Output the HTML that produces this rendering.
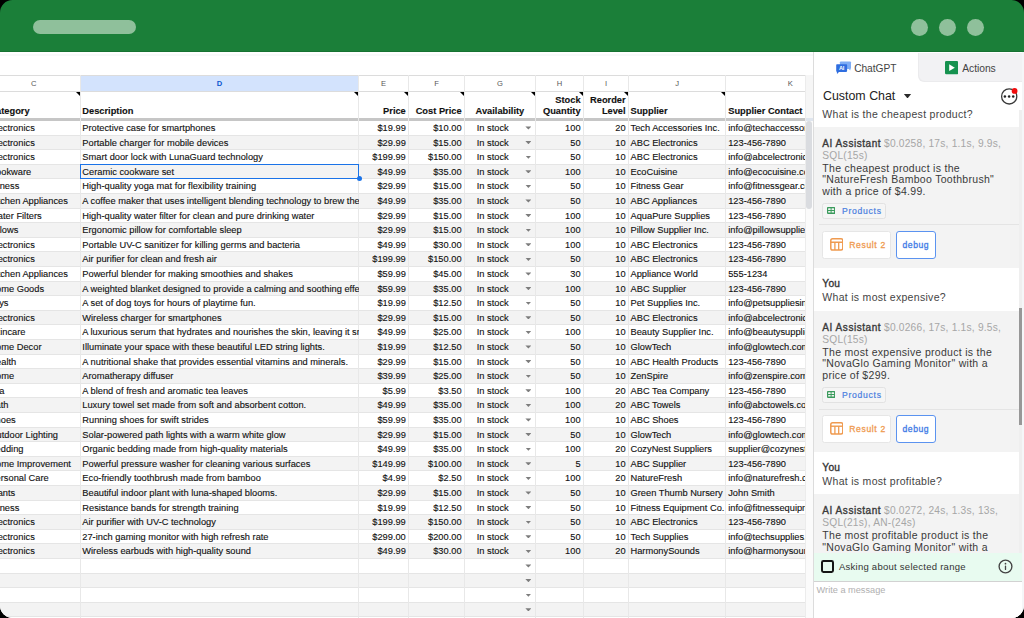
<!DOCTYPE html>
<html><head><meta charset="utf-8">
<style>
html,body{margin:0;padding:0;background:#000;width:1024px;height:618px;overflow:hidden}
*{font-family:"Liberation Sans",sans-serif}
#app{position:absolute;left:0;top:0;width:1024px;height:618px;border-radius:12.5px;overflow:hidden}
.r{position:absolute;left:0;right:0}
.hl{position:absolute;left:0;right:0;height:1px;background:#e5e5e5}
.hl2{position:absolute;left:0;right:0;height:1px;background:#dcdcdc}
.ch{position:absolute;left:0;right:0;background:#fff}
.vl{position:absolute;width:1px;height:600px;background:#e8e8e8}
.cl{position:absolute;text-align:center;font-size:7.6px;line-height:12px}
.c{position:absolute;white-space:nowrap;overflow:hidden;line-height:12px;box-sizing:border-box;-webkit-text-stroke:0.12px #111}
.tri{position:absolute;width:0;height:0;border-top:4.2px solid #000;border-left:4.2px solid transparent}
.dd{position:absolute;width:6px;height:3.2px;background:#7d7d7d;clip-path:polygon(0 0,100% 0,50% 100%)}
.t{position:absolute;white-space:pre}
</style></head><body>
<div id="app">
<div style="position:absolute;left:0;top:52px;width:1024px;height:566px;background:#fff"></div>
<div style="position:absolute;left:0;top:0;width:1024px;height:52px;background:#1b7f39"></div>
<div style="position:absolute;left:0;top:51px;width:1024px;height:1px;background:#167232"></div>
<div style="position:absolute;left:0;top:54px;width:813px;height:2px;background:#f8f9fa"></div>
<div style="position:absolute;left:32.7px;top:19.9px;width:103.2px;height:14.2px;border-radius:7.1px;background:#8fc09b"></div>
<div style="position:absolute;left:911px;top:19px;width:17px;height:17px;border-radius:50%;background:#8fc09b"></div>
<div style="position:absolute;left:939px;top:19px;width:17px;height:17px;border-radius:50%;background:#8fc09b"></div>
<div style="position:absolute;left:967px;top:19px;width:17px;height:17px;border-radius:50%;background:#8fc09b"></div>
<div id="sheet" style="position:absolute;left:0;top:52px;width:804.60px;height:566px;overflow:hidden">
<div class="r" style="top:68.40px;height:14.60px;background:#ffffff"></div>
<div class="r" style="top:83.00px;height:14.60px;background:#f3f3f3"></div>
<div class="r" style="top:97.60px;height:14.60px;background:#ffffff"></div>
<div class="r" style="top:112.20px;height:14.60px;background:#f3f3f3"></div>
<div class="r" style="top:126.80px;height:14.60px;background:#ffffff"></div>
<div class="r" style="top:141.40px;height:14.60px;background:#f3f3f3"></div>
<div class="r" style="top:156.00px;height:14.60px;background:#ffffff"></div>
<div class="r" style="top:170.60px;height:14.60px;background:#f3f3f3"></div>
<div class="r" style="top:185.20px;height:14.60px;background:#ffffff"></div>
<div class="r" style="top:199.80px;height:14.60px;background:#f3f3f3"></div>
<div class="r" style="top:214.40px;height:14.60px;background:#ffffff"></div>
<div class="r" style="top:229.00px;height:14.60px;background:#f3f3f3"></div>
<div class="r" style="top:243.60px;height:14.60px;background:#ffffff"></div>
<div class="r" style="top:258.20px;height:14.60px;background:#f3f3f3"></div>
<div class="r" style="top:272.80px;height:14.60px;background:#ffffff"></div>
<div class="r" style="top:287.40px;height:14.60px;background:#f3f3f3"></div>
<div class="r" style="top:302.00px;height:14.60px;background:#ffffff"></div>
<div class="r" style="top:316.60px;height:14.60px;background:#f3f3f3"></div>
<div class="r" style="top:331.20px;height:14.60px;background:#ffffff"></div>
<div class="r" style="top:345.80px;height:14.60px;background:#f3f3f3"></div>
<div class="r" style="top:360.40px;height:14.60px;background:#ffffff"></div>
<div class="r" style="top:375.00px;height:14.60px;background:#f3f3f3"></div>
<div class="r" style="top:389.60px;height:14.60px;background:#ffffff"></div>
<div class="r" style="top:404.20px;height:14.60px;background:#f3f3f3"></div>
<div class="r" style="top:418.80px;height:14.60px;background:#ffffff"></div>
<div class="r" style="top:433.40px;height:14.60px;background:#f3f3f3"></div>
<div class="r" style="top:448.00px;height:14.60px;background:#ffffff"></div>
<div class="r" style="top:462.60px;height:14.60px;background:#f3f3f3"></div>
<div class="r" style="top:477.20px;height:14.60px;background:#ffffff"></div>
<div class="r" style="top:491.80px;height:14.60px;background:#f3f3f3"></div>
<div class="r" style="top:506.40px;height:14.60px;background:#ffffff"></div>
<div class="r" style="top:521.00px;height:14.60px;background:#f3f3f3"></div>
<div class="r" style="top:535.60px;height:14.60px;background:#ffffff"></div>
<div class="r" style="top:550.20px;height:14.60px;background:#f3f3f3"></div>
<div class="r" style="top:564.80px;height:14.60px;background:#ffffff"></div>
<div class="hl" style="top:82.50px"></div>
<div class="hl" style="top:97.10px"></div>
<div class="hl" style="top:111.70px"></div>
<div class="hl" style="top:126.30px"></div>
<div class="hl" style="top:140.90px"></div>
<div class="hl" style="top:155.50px"></div>
<div class="hl" style="top:170.10px"></div>
<div class="hl" style="top:184.70px"></div>
<div class="hl" style="top:199.30px"></div>
<div class="hl" style="top:213.90px"></div>
<div class="hl" style="top:228.50px"></div>
<div class="hl" style="top:243.10px"></div>
<div class="hl" style="top:257.70px"></div>
<div class="hl" style="top:272.30px"></div>
<div class="hl" style="top:286.90px"></div>
<div class="hl" style="top:301.50px"></div>
<div class="hl" style="top:316.10px"></div>
<div class="hl" style="top:330.70px"></div>
<div class="hl" style="top:345.30px"></div>
<div class="hl" style="top:359.90px"></div>
<div class="hl" style="top:374.50px"></div>
<div class="hl" style="top:389.10px"></div>
<div class="hl" style="top:403.70px"></div>
<div class="hl" style="top:418.30px"></div>
<div class="hl" style="top:432.90px"></div>
<div class="hl" style="top:447.50px"></div>
<div class="hl" style="top:462.10px"></div>
<div class="hl" style="top:476.70px"></div>
<div class="hl" style="top:491.30px"></div>
<div class="hl" style="top:505.90px"></div>
<div class="hl" style="top:520.50px"></div>
<div class="hl" style="top:535.10px"></div>
<div class="hl" style="top:549.70px"></div>
<div class="hl" style="top:564.30px"></div>
<div class="hl" style="top:578.90px"></div>
<div class="ch" style="top:23.30px;height:16.10px"></div>
<div style="position:absolute;left:80.30px;top:23.30px;width:278.30px;height:16.10px;background:#d3e3fd"></div>
<div class="hl2" style="top:22.80px"></div>
<div class="hl2" style="top:38.90px"></div>
<div class="cl" style="left:3.65px;width:60px;top:26.47px;color:#575757">C</div>
<div class="cl" style="left:189.45px;width:60px;top:26.47px;color:#0b57d0;font-weight:bold">D</div>
<div class="cl" style="left:353.65px;width:60px;top:26.47px;color:#575757">E</div>
<div class="cl" style="left:406.60px;width:60px;top:26.47px;color:#575757">F</div>
<div class="cl" style="left:469.90px;width:60px;top:26.47px;color:#575757">G</div>
<div class="cl" style="left:529.40px;width:60px;top:26.47px;color:#575757">H</div>
<div class="cl" style="left:576.00px;width:60px;top:26.47px;color:#575757">I</div>
<div class="cl" style="left:647.05px;width:60px;top:26.47px;color:#575757">J</div>
<div class="cl" style="left:760.30px;width:60px;top:26.47px;color:#575757">K</div>
<div style="position:absolute;left:0;right:0;top:66.00px;height:3px;background:#c6c6c6"></div>
<div class="vl" style="left:79.80px;top:23.30px"></div>
<div class="vl" style="left:358.10px;top:23.30px"></div>
<div class="vl" style="left:408.20px;top:23.30px"></div>
<div class="vl" style="left:464.00px;top:23.30px"></div>
<div class="vl" style="left:534.80px;top:23.30px"></div>
<div class="vl" style="left:583.00px;top:23.30px"></div>
<div class="vl" style="left:628.00px;top:23.30px"></div>
<div class="vl" style="left:725.10px;top:23.30px"></div>
<div class="vl" style="left:854.50px;top:23.30px"></div>
<div class="c" style="left:-13.00px;top:52.58px;width:93.30px;text-align:left;padding-left:2.40px;padding-right:2.90px;font-size:9.29px;color:#111;font-weight:bold">Category</div>
<div class="c" style="left:80.30px;top:52.58px;width:278.30px;text-align:left;padding-left:2.00px;padding-right:2.90px;font-size:9.29px;color:#111;font-weight:bold">Description</div>
<div class="c" style="left:358.60px;top:52.58px;width:50.10px;text-align:right;padding-left:2.00px;padding-right:2.90px;font-size:9.29px;color:#111;font-weight:bold">Price</div>
<div class="c" style="left:408.70px;top:52.58px;width:55.80px;text-align:right;padding-left:2.00px;padding-right:2.90px;font-size:9.29px;color:#111;font-weight:bold">Cost Price</div>
<div class="c" style="left:464.50px;top:52.58px;width:70.80px;text-align:center;padding-left:0.00px;padding-right:0.00px;font-size:9.29px;color:#111;font-weight:bold">Availability</div>
<div class="c" style="left:535.30px;top:41.78px;width:48.20px;text-align:right;padding-left:2.00px;padding-right:2.90px;font-size:9.29px;color:#111;font-weight:bold">Stock</div>
<div class="c" style="left:535.30px;top:52.58px;width:48.20px;text-align:right;padding-left:2.00px;padding-right:2.90px;font-size:9.29px;color:#111;font-weight:bold">Quantity</div>
<div class="c" style="left:583.50px;top:41.78px;width:45.00px;text-align:right;padding-left:2.00px;padding-right:2.90px;font-size:9.29px;color:#111;font-weight:bold">Reorder</div>
<div class="c" style="left:583.50px;top:52.58px;width:45.00px;text-align:right;padding-left:2.00px;padding-right:2.90px;font-size:9.29px;color:#111;font-weight:bold">Level</div>
<div class="c" style="left:628.50px;top:52.58px;width:97.10px;text-align:left;padding-left:2.00px;padding-right:2.90px;font-size:9.29px;color:#111;font-weight:bold">Supplier</div>
<div class="c" style="left:725.60px;top:52.58px;width:129.40px;text-align:left;padding-left:2.60px;padding-right:2.90px;font-size:9.29px;color:#111;font-weight:bold">Supplier Contact</div>
<div class="tri" style="left:75.70px;top:39.60px"></div>
<div class="tri" style="left:354.00px;top:39.60px"></div>
<div class="tri" style="left:404.10px;top:39.60px"></div>
<div class="tri" style="left:459.90px;top:39.60px"></div>
<div class="tri" style="left:530.70px;top:39.60px"></div>
<div class="tri" style="left:578.90px;top:39.60px"></div>
<div class="tri" style="left:623.90px;top:39.60px"></div>
<div class="tri" style="left:721.00px;top:39.60px"></div>
<div class="c" style="left:-13.00px;top:69.98px;width:93.30px;text-align:left;padding-left:2.40px;padding-right:2.90px;font-size:9.29px;color:#111">Electronics</div>
<div class="c" style="left:80.30px;top:69.98px;width:278.30px;text-align:left;padding-left:2.00px;padding-right:2.90px;font-size:9.29px;color:#111">Protective case for smartphones</div>
<div class="c" style="left:358.60px;top:69.98px;width:50.10px;text-align:right;padding-left:2.00px;padding-right:2.90px;font-size:9.29px;color:#111">$19.99</div>
<div class="c" style="left:408.70px;top:69.98px;width:55.80px;text-align:right;padding-left:2.00px;padding-right:2.90px;font-size:9.29px;color:#111">$10.00</div>
<div class="c" style="left:464.50px;top:69.98px;width:70.80px;text-align:left;padding-left:12.20px;padding-right:2.90px;font-size:9.29px;color:#111">In stock</div>
<div class="dd" style="left:525.40px;top:74.40px"></div>
<div class="c" style="left:535.30px;top:69.98px;width:48.20px;text-align:right;padding-left:2.00px;padding-right:2.90px;font-size:9.29px;color:#111">100</div>
<div class="c" style="left:583.50px;top:69.98px;width:45.00px;text-align:right;padding-left:2.00px;padding-right:2.90px;font-size:9.29px;color:#111">20</div>
<div class="c" style="left:628.50px;top:69.98px;width:97.10px;text-align:left;padding-left:2.00px;padding-right:2.90px;font-size:9.29px;color:#111">Tech Accessories Inc.</div>
<div class="c" style="left:725.60px;top:69.98px;width:129.40px;text-align:left;padding-left:2.60px;padding-right:2.90px;font-size:9.29px;color:#111">info@techaccessories.com</div>
<div class="c" style="left:-13.00px;top:84.58px;width:93.30px;text-align:left;padding-left:2.40px;padding-right:2.90px;font-size:9.29px;color:#111">Electronics</div>
<div class="c" style="left:80.30px;top:84.58px;width:278.30px;text-align:left;padding-left:2.00px;padding-right:2.90px;font-size:9.29px;color:#111">Portable charger for mobile devices</div>
<div class="c" style="left:358.60px;top:84.58px;width:50.10px;text-align:right;padding-left:2.00px;padding-right:2.90px;font-size:9.29px;color:#111">$29.99</div>
<div class="c" style="left:408.70px;top:84.58px;width:55.80px;text-align:right;padding-left:2.00px;padding-right:2.90px;font-size:9.29px;color:#111">$15.00</div>
<div class="c" style="left:464.50px;top:84.58px;width:70.80px;text-align:left;padding-left:12.20px;padding-right:2.90px;font-size:9.29px;color:#111">In stock</div>
<div class="dd" style="left:525.40px;top:89.00px"></div>
<div class="c" style="left:535.30px;top:84.58px;width:48.20px;text-align:right;padding-left:2.00px;padding-right:2.90px;font-size:9.29px;color:#111">50</div>
<div class="c" style="left:583.50px;top:84.58px;width:45.00px;text-align:right;padding-left:2.00px;padding-right:2.90px;font-size:9.29px;color:#111">10</div>
<div class="c" style="left:628.50px;top:84.58px;width:97.10px;text-align:left;padding-left:2.00px;padding-right:2.90px;font-size:9.29px;color:#111">ABC Electronics</div>
<div class="c" style="left:725.60px;top:84.58px;width:129.40px;text-align:left;padding-left:2.60px;padding-right:2.90px;font-size:9.29px;color:#111">123-456-7890</div>
<div class="c" style="left:-13.00px;top:99.18px;width:93.30px;text-align:left;padding-left:2.40px;padding-right:2.90px;font-size:9.29px;color:#111">Electronics</div>
<div class="c" style="left:80.30px;top:99.18px;width:278.30px;text-align:left;padding-left:2.00px;padding-right:2.90px;font-size:9.29px;color:#111">Smart door lock with LunaGuard technology</div>
<div class="c" style="left:358.60px;top:99.18px;width:50.10px;text-align:right;padding-left:2.00px;padding-right:2.90px;font-size:9.29px;color:#111">$199.99</div>
<div class="c" style="left:408.70px;top:99.18px;width:55.80px;text-align:right;padding-left:2.00px;padding-right:2.90px;font-size:9.29px;color:#111">$150.00</div>
<div class="c" style="left:464.50px;top:99.18px;width:70.80px;text-align:left;padding-left:12.20px;padding-right:2.90px;font-size:9.29px;color:#111">In stock</div>
<div class="dd" style="left:525.40px;top:103.60px"></div>
<div class="c" style="left:535.30px;top:99.18px;width:48.20px;text-align:right;padding-left:2.00px;padding-right:2.90px;font-size:9.29px;color:#111">50</div>
<div class="c" style="left:583.50px;top:99.18px;width:45.00px;text-align:right;padding-left:2.00px;padding-right:2.90px;font-size:9.29px;color:#111">10</div>
<div class="c" style="left:628.50px;top:99.18px;width:97.10px;text-align:left;padding-left:2.00px;padding-right:2.90px;font-size:9.29px;color:#111">ABC Electronics</div>
<div class="c" style="left:725.60px;top:99.18px;width:129.40px;text-align:left;padding-left:2.60px;padding-right:2.90px;font-size:9.29px;color:#111">info@abcelectronics.com</div>
<div class="c" style="left:-13.00px;top:113.78px;width:93.30px;text-align:left;padding-left:2.40px;padding-right:2.90px;font-size:9.29px;color:#111">Cookware</div>
<div class="c" style="left:80.30px;top:113.78px;width:278.30px;text-align:left;padding-left:2.00px;padding-right:2.90px;font-size:9.29px;color:#111">Ceramic cookware set</div>
<div class="c" style="left:358.60px;top:113.78px;width:50.10px;text-align:right;padding-left:2.00px;padding-right:2.90px;font-size:9.29px;color:#111">$49.99</div>
<div class="c" style="left:408.70px;top:113.78px;width:55.80px;text-align:right;padding-left:2.00px;padding-right:2.90px;font-size:9.29px;color:#111">$35.00</div>
<div class="c" style="left:464.50px;top:113.78px;width:70.80px;text-align:left;padding-left:12.20px;padding-right:2.90px;font-size:9.29px;color:#111">In stock</div>
<div class="dd" style="left:525.40px;top:118.20px"></div>
<div class="c" style="left:535.30px;top:113.78px;width:48.20px;text-align:right;padding-left:2.00px;padding-right:2.90px;font-size:9.29px;color:#111">100</div>
<div class="c" style="left:583.50px;top:113.78px;width:45.00px;text-align:right;padding-left:2.00px;padding-right:2.90px;font-size:9.29px;color:#111">10</div>
<div class="c" style="left:628.50px;top:113.78px;width:97.10px;text-align:left;padding-left:2.00px;padding-right:2.90px;font-size:9.29px;color:#111">EcoCuisine</div>
<div class="c" style="left:725.60px;top:113.78px;width:129.40px;text-align:left;padding-left:2.60px;padding-right:2.90px;font-size:9.29px;color:#111">info@ecocuisine.com</div>
<div class="c" style="left:-13.00px;top:128.38px;width:93.30px;text-align:left;padding-left:2.40px;padding-right:2.90px;font-size:9.29px;color:#111">Fitness</div>
<div class="c" style="left:80.30px;top:128.38px;width:278.30px;text-align:left;padding-left:2.00px;padding-right:2.90px;font-size:9.29px;color:#111">High-quality yoga mat for flexibility training</div>
<div class="c" style="left:358.60px;top:128.38px;width:50.10px;text-align:right;padding-left:2.00px;padding-right:2.90px;font-size:9.29px;color:#111">$29.99</div>
<div class="c" style="left:408.70px;top:128.38px;width:55.80px;text-align:right;padding-left:2.00px;padding-right:2.90px;font-size:9.29px;color:#111">$15.00</div>
<div class="c" style="left:464.50px;top:128.38px;width:70.80px;text-align:left;padding-left:12.20px;padding-right:2.90px;font-size:9.29px;color:#111">In stock</div>
<div class="dd" style="left:525.40px;top:132.80px"></div>
<div class="c" style="left:535.30px;top:128.38px;width:48.20px;text-align:right;padding-left:2.00px;padding-right:2.90px;font-size:9.29px;color:#111">50</div>
<div class="c" style="left:583.50px;top:128.38px;width:45.00px;text-align:right;padding-left:2.00px;padding-right:2.90px;font-size:9.29px;color:#111">10</div>
<div class="c" style="left:628.50px;top:128.38px;width:97.10px;text-align:left;padding-left:2.00px;padding-right:2.90px;font-size:9.29px;color:#111">Fitness Gear</div>
<div class="c" style="left:725.60px;top:128.38px;width:129.40px;text-align:left;padding-left:2.60px;padding-right:2.90px;font-size:9.29px;color:#111">info@fitnessgear.com</div>
<div class="c" style="left:-13.00px;top:142.98px;width:93.30px;text-align:left;padding-left:2.40px;padding-right:2.90px;font-size:9.29px;color:#111">Kitchen Appliances</div>
<div class="c" style="left:80.30px;top:142.98px;width:278.30px;text-align:left;padding-left:2.00px;padding-right:2.90px;font-size:9.29px;color:#111">A coffee maker that uses intelligent blending technology to brew the perfect cup</div>
<div class="c" style="left:358.60px;top:142.98px;width:50.10px;text-align:right;padding-left:2.00px;padding-right:2.90px;font-size:9.29px;color:#111">$49.99</div>
<div class="c" style="left:408.70px;top:142.98px;width:55.80px;text-align:right;padding-left:2.00px;padding-right:2.90px;font-size:9.29px;color:#111">$35.00</div>
<div class="c" style="left:464.50px;top:142.98px;width:70.80px;text-align:left;padding-left:12.20px;padding-right:2.90px;font-size:9.29px;color:#111">In stock</div>
<div class="dd" style="left:525.40px;top:147.40px"></div>
<div class="c" style="left:535.30px;top:142.98px;width:48.20px;text-align:right;padding-left:2.00px;padding-right:2.90px;font-size:9.29px;color:#111">50</div>
<div class="c" style="left:583.50px;top:142.98px;width:45.00px;text-align:right;padding-left:2.00px;padding-right:2.90px;font-size:9.29px;color:#111">10</div>
<div class="c" style="left:628.50px;top:142.98px;width:97.10px;text-align:left;padding-left:2.00px;padding-right:2.90px;font-size:9.29px;color:#111">ABC Appliances</div>
<div class="c" style="left:725.60px;top:142.98px;width:129.40px;text-align:left;padding-left:2.60px;padding-right:2.90px;font-size:9.29px;color:#111">123-456-7890</div>
<div class="c" style="left:-13.00px;top:157.58px;width:93.30px;text-align:left;padding-left:2.40px;padding-right:2.90px;font-size:9.29px;color:#111">Water Filters</div>
<div class="c" style="left:80.30px;top:157.58px;width:278.30px;text-align:left;padding-left:2.00px;padding-right:2.90px;font-size:9.29px;color:#111">High-quality water filter for clean and pure drinking water</div>
<div class="c" style="left:358.60px;top:157.58px;width:50.10px;text-align:right;padding-left:2.00px;padding-right:2.90px;font-size:9.29px;color:#111">$29.99</div>
<div class="c" style="left:408.70px;top:157.58px;width:55.80px;text-align:right;padding-left:2.00px;padding-right:2.90px;font-size:9.29px;color:#111">$15.00</div>
<div class="c" style="left:464.50px;top:157.58px;width:70.80px;text-align:left;padding-left:12.20px;padding-right:2.90px;font-size:9.29px;color:#111">In stock</div>
<div class="dd" style="left:525.40px;top:162.00px"></div>
<div class="c" style="left:535.30px;top:157.58px;width:48.20px;text-align:right;padding-left:2.00px;padding-right:2.90px;font-size:9.29px;color:#111">100</div>
<div class="c" style="left:583.50px;top:157.58px;width:45.00px;text-align:right;padding-left:2.00px;padding-right:2.90px;font-size:9.29px;color:#111">10</div>
<div class="c" style="left:628.50px;top:157.58px;width:97.10px;text-align:left;padding-left:2.00px;padding-right:2.90px;font-size:9.29px;color:#111">AquaPure Supplies</div>
<div class="c" style="left:725.60px;top:157.58px;width:129.40px;text-align:left;padding-left:2.60px;padding-right:2.90px;font-size:9.29px;color:#111">123-456-7890</div>
<div class="c" style="left:-13.00px;top:172.18px;width:93.30px;text-align:left;padding-left:2.40px;padding-right:2.90px;font-size:9.29px;color:#111">Pillows</div>
<div class="c" style="left:80.30px;top:172.18px;width:278.30px;text-align:left;padding-left:2.00px;padding-right:2.90px;font-size:9.29px;color:#111">Ergonomic pillow for comfortable sleep</div>
<div class="c" style="left:358.60px;top:172.18px;width:50.10px;text-align:right;padding-left:2.00px;padding-right:2.90px;font-size:9.29px;color:#111">$29.99</div>
<div class="c" style="left:408.70px;top:172.18px;width:55.80px;text-align:right;padding-left:2.00px;padding-right:2.90px;font-size:9.29px;color:#111">$15.00</div>
<div class="c" style="left:464.50px;top:172.18px;width:70.80px;text-align:left;padding-left:12.20px;padding-right:2.90px;font-size:9.29px;color:#111">In stock</div>
<div class="dd" style="left:525.40px;top:176.60px"></div>
<div class="c" style="left:535.30px;top:172.18px;width:48.20px;text-align:right;padding-left:2.00px;padding-right:2.90px;font-size:9.29px;color:#111">100</div>
<div class="c" style="left:583.50px;top:172.18px;width:45.00px;text-align:right;padding-left:2.00px;padding-right:2.90px;font-size:9.29px;color:#111">10</div>
<div class="c" style="left:628.50px;top:172.18px;width:97.10px;text-align:left;padding-left:2.00px;padding-right:2.90px;font-size:9.29px;color:#111">Pillow Supplier Inc.</div>
<div class="c" style="left:725.60px;top:172.18px;width:129.40px;text-align:left;padding-left:2.60px;padding-right:2.90px;font-size:9.29px;color:#111">info@pillowsupplier.com</div>
<div class="c" style="left:-13.00px;top:186.78px;width:93.30px;text-align:left;padding-left:2.40px;padding-right:2.90px;font-size:9.29px;color:#111">Electronics</div>
<div class="c" style="left:80.30px;top:186.78px;width:278.30px;text-align:left;padding-left:2.00px;padding-right:2.90px;font-size:9.29px;color:#111">Portable UV-C sanitizer for killing germs and bacteria</div>
<div class="c" style="left:358.60px;top:186.78px;width:50.10px;text-align:right;padding-left:2.00px;padding-right:2.90px;font-size:9.29px;color:#111">$49.99</div>
<div class="c" style="left:408.70px;top:186.78px;width:55.80px;text-align:right;padding-left:2.00px;padding-right:2.90px;font-size:9.29px;color:#111">$30.00</div>
<div class="c" style="left:464.50px;top:186.78px;width:70.80px;text-align:left;padding-left:12.20px;padding-right:2.90px;font-size:9.29px;color:#111">In stock</div>
<div class="dd" style="left:525.40px;top:191.20px"></div>
<div class="c" style="left:535.30px;top:186.78px;width:48.20px;text-align:right;padding-left:2.00px;padding-right:2.90px;font-size:9.29px;color:#111">100</div>
<div class="c" style="left:583.50px;top:186.78px;width:45.00px;text-align:right;padding-left:2.00px;padding-right:2.90px;font-size:9.29px;color:#111">10</div>
<div class="c" style="left:628.50px;top:186.78px;width:97.10px;text-align:left;padding-left:2.00px;padding-right:2.90px;font-size:9.29px;color:#111">ABC Electronics</div>
<div class="c" style="left:725.60px;top:186.78px;width:129.40px;text-align:left;padding-left:2.60px;padding-right:2.90px;font-size:9.29px;color:#111">123-456-7890</div>
<div class="c" style="left:-13.00px;top:201.38px;width:93.30px;text-align:left;padding-left:2.40px;padding-right:2.90px;font-size:9.29px;color:#111">Electronics</div>
<div class="c" style="left:80.30px;top:201.38px;width:278.30px;text-align:left;padding-left:2.00px;padding-right:2.90px;font-size:9.29px;color:#111">Air purifier for clean and fresh air</div>
<div class="c" style="left:358.60px;top:201.38px;width:50.10px;text-align:right;padding-left:2.00px;padding-right:2.90px;font-size:9.29px;color:#111">$199.99</div>
<div class="c" style="left:408.70px;top:201.38px;width:55.80px;text-align:right;padding-left:2.00px;padding-right:2.90px;font-size:9.29px;color:#111">$150.00</div>
<div class="c" style="left:464.50px;top:201.38px;width:70.80px;text-align:left;padding-left:12.20px;padding-right:2.90px;font-size:9.29px;color:#111">In stock</div>
<div class="dd" style="left:525.40px;top:205.80px"></div>
<div class="c" style="left:535.30px;top:201.38px;width:48.20px;text-align:right;padding-left:2.00px;padding-right:2.90px;font-size:9.29px;color:#111">50</div>
<div class="c" style="left:583.50px;top:201.38px;width:45.00px;text-align:right;padding-left:2.00px;padding-right:2.90px;font-size:9.29px;color:#111">10</div>
<div class="c" style="left:628.50px;top:201.38px;width:97.10px;text-align:left;padding-left:2.00px;padding-right:2.90px;font-size:9.29px;color:#111">ABC Electronics</div>
<div class="c" style="left:725.60px;top:201.38px;width:129.40px;text-align:left;padding-left:2.60px;padding-right:2.90px;font-size:9.29px;color:#111">123-456-7890</div>
<div class="c" style="left:-13.00px;top:215.98px;width:93.30px;text-align:left;padding-left:2.40px;padding-right:2.90px;font-size:9.29px;color:#111">Kitchen Appliances</div>
<div class="c" style="left:80.30px;top:215.98px;width:278.30px;text-align:left;padding-left:2.00px;padding-right:2.90px;font-size:9.29px;color:#111">Powerful blender for making smoothies and shakes</div>
<div class="c" style="left:358.60px;top:215.98px;width:50.10px;text-align:right;padding-left:2.00px;padding-right:2.90px;font-size:9.29px;color:#111">$59.99</div>
<div class="c" style="left:408.70px;top:215.98px;width:55.80px;text-align:right;padding-left:2.00px;padding-right:2.90px;font-size:9.29px;color:#111">$45.00</div>
<div class="c" style="left:464.50px;top:215.98px;width:70.80px;text-align:left;padding-left:12.20px;padding-right:2.90px;font-size:9.29px;color:#111">In stock</div>
<div class="dd" style="left:525.40px;top:220.40px"></div>
<div class="c" style="left:535.30px;top:215.98px;width:48.20px;text-align:right;padding-left:2.00px;padding-right:2.90px;font-size:9.29px;color:#111">30</div>
<div class="c" style="left:583.50px;top:215.98px;width:45.00px;text-align:right;padding-left:2.00px;padding-right:2.90px;font-size:9.29px;color:#111">10</div>
<div class="c" style="left:628.50px;top:215.98px;width:97.10px;text-align:left;padding-left:2.00px;padding-right:2.90px;font-size:9.29px;color:#111">Appliance World</div>
<div class="c" style="left:725.60px;top:215.98px;width:129.40px;text-align:left;padding-left:2.60px;padding-right:2.90px;font-size:9.29px;color:#111">555-1234</div>
<div class="c" style="left:-13.00px;top:230.58px;width:93.30px;text-align:left;padding-left:2.40px;padding-right:2.90px;font-size:9.29px;color:#111">Home Goods</div>
<div class="c" style="left:80.30px;top:230.58px;width:278.30px;text-align:left;padding-left:2.00px;padding-right:2.90px;font-size:9.29px;color:#111">A weighted blanket designed to provide a calming and soothing effect</div>
<div class="c" style="left:358.60px;top:230.58px;width:50.10px;text-align:right;padding-left:2.00px;padding-right:2.90px;font-size:9.29px;color:#111">$59.99</div>
<div class="c" style="left:408.70px;top:230.58px;width:55.80px;text-align:right;padding-left:2.00px;padding-right:2.90px;font-size:9.29px;color:#111">$35.00</div>
<div class="c" style="left:464.50px;top:230.58px;width:70.80px;text-align:left;padding-left:12.20px;padding-right:2.90px;font-size:9.29px;color:#111">In stock</div>
<div class="dd" style="left:525.40px;top:235.00px"></div>
<div class="c" style="left:535.30px;top:230.58px;width:48.20px;text-align:right;padding-left:2.00px;padding-right:2.90px;font-size:9.29px;color:#111">100</div>
<div class="c" style="left:583.50px;top:230.58px;width:45.00px;text-align:right;padding-left:2.00px;padding-right:2.90px;font-size:9.29px;color:#111">10</div>
<div class="c" style="left:628.50px;top:230.58px;width:97.10px;text-align:left;padding-left:2.00px;padding-right:2.90px;font-size:9.29px;color:#111">ABC Supplier</div>
<div class="c" style="left:725.60px;top:230.58px;width:129.40px;text-align:left;padding-left:2.60px;padding-right:2.90px;font-size:9.29px;color:#111">123-456-7890</div>
<div class="c" style="left:-13.00px;top:245.18px;width:93.30px;text-align:left;padding-left:2.40px;padding-right:2.90px;font-size:9.29px;color:#111">Toys</div>
<div class="c" style="left:80.30px;top:245.18px;width:278.30px;text-align:left;padding-left:2.00px;padding-right:2.90px;font-size:9.29px;color:#111">A set of dog toys for hours of playtime fun.</div>
<div class="c" style="left:358.60px;top:245.18px;width:50.10px;text-align:right;padding-left:2.00px;padding-right:2.90px;font-size:9.29px;color:#111">$19.99</div>
<div class="c" style="left:408.70px;top:245.18px;width:55.80px;text-align:right;padding-left:2.00px;padding-right:2.90px;font-size:9.29px;color:#111">$12.50</div>
<div class="c" style="left:464.50px;top:245.18px;width:70.80px;text-align:left;padding-left:12.20px;padding-right:2.90px;font-size:9.29px;color:#111">In stock</div>
<div class="dd" style="left:525.40px;top:249.60px"></div>
<div class="c" style="left:535.30px;top:245.18px;width:48.20px;text-align:right;padding-left:2.00px;padding-right:2.90px;font-size:9.29px;color:#111">50</div>
<div class="c" style="left:583.50px;top:245.18px;width:45.00px;text-align:right;padding-left:2.00px;padding-right:2.90px;font-size:9.29px;color:#111">10</div>
<div class="c" style="left:628.50px;top:245.18px;width:97.10px;text-align:left;padding-left:2.00px;padding-right:2.90px;font-size:9.29px;color:#111">Pet Supplies Inc.</div>
<div class="c" style="left:725.60px;top:245.18px;width:129.40px;text-align:left;padding-left:2.60px;padding-right:2.90px;font-size:9.29px;color:#111">info@petsuppliesinc.com</div>
<div class="c" style="left:-13.00px;top:259.78px;width:93.30px;text-align:left;padding-left:2.40px;padding-right:2.90px;font-size:9.29px;color:#111">Electronics</div>
<div class="c" style="left:80.30px;top:259.78px;width:278.30px;text-align:left;padding-left:2.00px;padding-right:2.90px;font-size:9.29px;color:#111">Wireless charger for smartphones</div>
<div class="c" style="left:358.60px;top:259.78px;width:50.10px;text-align:right;padding-left:2.00px;padding-right:2.90px;font-size:9.29px;color:#111">$29.99</div>
<div class="c" style="left:408.70px;top:259.78px;width:55.80px;text-align:right;padding-left:2.00px;padding-right:2.90px;font-size:9.29px;color:#111">$15.00</div>
<div class="c" style="left:464.50px;top:259.78px;width:70.80px;text-align:left;padding-left:12.20px;padding-right:2.90px;font-size:9.29px;color:#111">In stock</div>
<div class="dd" style="left:525.40px;top:264.20px"></div>
<div class="c" style="left:535.30px;top:259.78px;width:48.20px;text-align:right;padding-left:2.00px;padding-right:2.90px;font-size:9.29px;color:#111">50</div>
<div class="c" style="left:583.50px;top:259.78px;width:45.00px;text-align:right;padding-left:2.00px;padding-right:2.90px;font-size:9.29px;color:#111">10</div>
<div class="c" style="left:628.50px;top:259.78px;width:97.10px;text-align:left;padding-left:2.00px;padding-right:2.90px;font-size:9.29px;color:#111">ABC Electronics</div>
<div class="c" style="left:725.60px;top:259.78px;width:129.40px;text-align:left;padding-left:2.60px;padding-right:2.90px;font-size:9.29px;color:#111">info@abcelectronics.com</div>
<div class="c" style="left:-13.00px;top:274.38px;width:93.30px;text-align:left;padding-left:2.40px;padding-right:2.90px;font-size:9.29px;color:#111">Skincare</div>
<div class="c" style="left:80.30px;top:274.38px;width:278.30px;text-align:left;padding-left:2.00px;padding-right:2.90px;font-size:9.29px;color:#111">A luxurious serum that hydrates and nourishes the skin, leaving it smooth</div>
<div class="c" style="left:358.60px;top:274.38px;width:50.10px;text-align:right;padding-left:2.00px;padding-right:2.90px;font-size:9.29px;color:#111">$49.99</div>
<div class="c" style="left:408.70px;top:274.38px;width:55.80px;text-align:right;padding-left:2.00px;padding-right:2.90px;font-size:9.29px;color:#111">$25.00</div>
<div class="c" style="left:464.50px;top:274.38px;width:70.80px;text-align:left;padding-left:12.20px;padding-right:2.90px;font-size:9.29px;color:#111">In stock</div>
<div class="dd" style="left:525.40px;top:278.80px"></div>
<div class="c" style="left:535.30px;top:274.38px;width:48.20px;text-align:right;padding-left:2.00px;padding-right:2.90px;font-size:9.29px;color:#111">100</div>
<div class="c" style="left:583.50px;top:274.38px;width:45.00px;text-align:right;padding-left:2.00px;padding-right:2.90px;font-size:9.29px;color:#111">10</div>
<div class="c" style="left:628.50px;top:274.38px;width:97.10px;text-align:left;padding-left:2.00px;padding-right:2.90px;font-size:9.29px;color:#111">Beauty Supplier Inc.</div>
<div class="c" style="left:725.60px;top:274.38px;width:129.40px;text-align:left;padding-left:2.60px;padding-right:2.90px;font-size:9.29px;color:#111">info@beautysupplier.com</div>
<div class="c" style="left:-13.00px;top:288.98px;width:93.30px;text-align:left;padding-left:2.40px;padding-right:2.90px;font-size:9.29px;color:#111">Home Decor</div>
<div class="c" style="left:80.30px;top:288.98px;width:278.30px;text-align:left;padding-left:2.00px;padding-right:2.90px;font-size:9.29px;color:#111">Illuminate your space with these beautiful LED string lights.</div>
<div class="c" style="left:358.60px;top:288.98px;width:50.10px;text-align:right;padding-left:2.00px;padding-right:2.90px;font-size:9.29px;color:#111">$19.99</div>
<div class="c" style="left:408.70px;top:288.98px;width:55.80px;text-align:right;padding-left:2.00px;padding-right:2.90px;font-size:9.29px;color:#111">$12.50</div>
<div class="c" style="left:464.50px;top:288.98px;width:70.80px;text-align:left;padding-left:12.20px;padding-right:2.90px;font-size:9.29px;color:#111">In stock</div>
<div class="dd" style="left:525.40px;top:293.40px"></div>
<div class="c" style="left:535.30px;top:288.98px;width:48.20px;text-align:right;padding-left:2.00px;padding-right:2.90px;font-size:9.29px;color:#111">50</div>
<div class="c" style="left:583.50px;top:288.98px;width:45.00px;text-align:right;padding-left:2.00px;padding-right:2.90px;font-size:9.29px;color:#111">10</div>
<div class="c" style="left:628.50px;top:288.98px;width:97.10px;text-align:left;padding-left:2.00px;padding-right:2.90px;font-size:9.29px;color:#111">GlowTech</div>
<div class="c" style="left:725.60px;top:288.98px;width:129.40px;text-align:left;padding-left:2.60px;padding-right:2.90px;font-size:9.29px;color:#111">info@glowtech.com</div>
<div class="c" style="left:-13.00px;top:303.58px;width:93.30px;text-align:left;padding-left:2.40px;padding-right:2.90px;font-size:9.29px;color:#111">Health</div>
<div class="c" style="left:80.30px;top:303.58px;width:278.30px;text-align:left;padding-left:2.00px;padding-right:2.90px;font-size:9.29px;color:#111">A nutritional shake that provides essential vitamins and minerals.</div>
<div class="c" style="left:358.60px;top:303.58px;width:50.10px;text-align:right;padding-left:2.00px;padding-right:2.90px;font-size:9.29px;color:#111">$29.99</div>
<div class="c" style="left:408.70px;top:303.58px;width:55.80px;text-align:right;padding-left:2.00px;padding-right:2.90px;font-size:9.29px;color:#111">$15.00</div>
<div class="c" style="left:464.50px;top:303.58px;width:70.80px;text-align:left;padding-left:12.20px;padding-right:2.90px;font-size:9.29px;color:#111">In stock</div>
<div class="dd" style="left:525.40px;top:308.00px"></div>
<div class="c" style="left:535.30px;top:303.58px;width:48.20px;text-align:right;padding-left:2.00px;padding-right:2.90px;font-size:9.29px;color:#111">50</div>
<div class="c" style="left:583.50px;top:303.58px;width:45.00px;text-align:right;padding-left:2.00px;padding-right:2.90px;font-size:9.29px;color:#111">10</div>
<div class="c" style="left:628.50px;top:303.58px;width:97.10px;text-align:left;padding-left:2.00px;padding-right:2.90px;font-size:9.29px;color:#111">ABC Health Products</div>
<div class="c" style="left:725.60px;top:303.58px;width:129.40px;text-align:left;padding-left:2.60px;padding-right:2.90px;font-size:9.29px;color:#111">123-456-7890</div>
<div class="c" style="left:-13.00px;top:318.18px;width:93.30px;text-align:left;padding-left:2.40px;padding-right:2.90px;font-size:9.29px;color:#111">Home</div>
<div class="c" style="left:80.30px;top:318.18px;width:278.30px;text-align:left;padding-left:2.00px;padding-right:2.90px;font-size:9.29px;color:#111">Aromatherapy diffuser</div>
<div class="c" style="left:358.60px;top:318.18px;width:50.10px;text-align:right;padding-left:2.00px;padding-right:2.90px;font-size:9.29px;color:#111">$39.99</div>
<div class="c" style="left:408.70px;top:318.18px;width:55.80px;text-align:right;padding-left:2.00px;padding-right:2.90px;font-size:9.29px;color:#111">$25.00</div>
<div class="c" style="left:464.50px;top:318.18px;width:70.80px;text-align:left;padding-left:12.20px;padding-right:2.90px;font-size:9.29px;color:#111">In stock</div>
<div class="dd" style="left:525.40px;top:322.60px"></div>
<div class="c" style="left:535.30px;top:318.18px;width:48.20px;text-align:right;padding-left:2.00px;padding-right:2.90px;font-size:9.29px;color:#111">50</div>
<div class="c" style="left:583.50px;top:318.18px;width:45.00px;text-align:right;padding-left:2.00px;padding-right:2.90px;font-size:9.29px;color:#111">10</div>
<div class="c" style="left:628.50px;top:318.18px;width:97.10px;text-align:left;padding-left:2.00px;padding-right:2.90px;font-size:9.29px;color:#111">ZenSpire</div>
<div class="c" style="left:725.60px;top:318.18px;width:129.40px;text-align:left;padding-left:2.60px;padding-right:2.90px;font-size:9.29px;color:#111">info@zenspire.com</div>
<div class="c" style="left:-13.00px;top:332.78px;width:93.30px;text-align:left;padding-left:2.40px;padding-right:2.90px;font-size:9.29px;color:#111">Tea</div>
<div class="c" style="left:80.30px;top:332.78px;width:278.30px;text-align:left;padding-left:2.00px;padding-right:2.90px;font-size:9.29px;color:#111">A blend of fresh and aromatic tea leaves</div>
<div class="c" style="left:358.60px;top:332.78px;width:50.10px;text-align:right;padding-left:2.00px;padding-right:2.90px;font-size:9.29px;color:#111">$5.99</div>
<div class="c" style="left:408.70px;top:332.78px;width:55.80px;text-align:right;padding-left:2.00px;padding-right:2.90px;font-size:9.29px;color:#111">$3.50</div>
<div class="c" style="left:464.50px;top:332.78px;width:70.80px;text-align:left;padding-left:12.20px;padding-right:2.90px;font-size:9.29px;color:#111">In stock</div>
<div class="dd" style="left:525.40px;top:337.20px"></div>
<div class="c" style="left:535.30px;top:332.78px;width:48.20px;text-align:right;padding-left:2.00px;padding-right:2.90px;font-size:9.29px;color:#111">100</div>
<div class="c" style="left:583.50px;top:332.78px;width:45.00px;text-align:right;padding-left:2.00px;padding-right:2.90px;font-size:9.29px;color:#111">20</div>
<div class="c" style="left:628.50px;top:332.78px;width:97.10px;text-align:left;padding-left:2.00px;padding-right:2.90px;font-size:9.29px;color:#111">ABC Tea Company</div>
<div class="c" style="left:725.60px;top:332.78px;width:129.40px;text-align:left;padding-left:2.60px;padding-right:2.90px;font-size:9.29px;color:#111">123-456-7890</div>
<div class="c" style="left:-13.00px;top:347.38px;width:93.30px;text-align:left;padding-left:2.40px;padding-right:2.90px;font-size:9.29px;color:#111">Bath</div>
<div class="c" style="left:80.30px;top:347.38px;width:278.30px;text-align:left;padding-left:2.00px;padding-right:2.90px;font-size:9.29px;color:#111">Luxury towel set made from soft and absorbent cotton.</div>
<div class="c" style="left:358.60px;top:347.38px;width:50.10px;text-align:right;padding-left:2.00px;padding-right:2.90px;font-size:9.29px;color:#111">$49.99</div>
<div class="c" style="left:408.70px;top:347.38px;width:55.80px;text-align:right;padding-left:2.00px;padding-right:2.90px;font-size:9.29px;color:#111">$35.00</div>
<div class="c" style="left:464.50px;top:347.38px;width:70.80px;text-align:left;padding-left:12.20px;padding-right:2.90px;font-size:9.29px;color:#111">In stock</div>
<div class="dd" style="left:525.40px;top:351.80px"></div>
<div class="c" style="left:535.30px;top:347.38px;width:48.20px;text-align:right;padding-left:2.00px;padding-right:2.90px;font-size:9.29px;color:#111">100</div>
<div class="c" style="left:583.50px;top:347.38px;width:45.00px;text-align:right;padding-left:2.00px;padding-right:2.90px;font-size:9.29px;color:#111">20</div>
<div class="c" style="left:628.50px;top:347.38px;width:97.10px;text-align:left;padding-left:2.00px;padding-right:2.90px;font-size:9.29px;color:#111">ABC Towels</div>
<div class="c" style="left:725.60px;top:347.38px;width:129.40px;text-align:left;padding-left:2.60px;padding-right:2.90px;font-size:9.29px;color:#111">info@abctowels.com</div>
<div class="c" style="left:-13.00px;top:361.98px;width:93.30px;text-align:left;padding-left:2.40px;padding-right:2.90px;font-size:9.29px;color:#111">Shoes</div>
<div class="c" style="left:80.30px;top:361.98px;width:278.30px;text-align:left;padding-left:2.00px;padding-right:2.90px;font-size:9.29px;color:#111">Running shoes for swift strides</div>
<div class="c" style="left:358.60px;top:361.98px;width:50.10px;text-align:right;padding-left:2.00px;padding-right:2.90px;font-size:9.29px;color:#111">$59.99</div>
<div class="c" style="left:408.70px;top:361.98px;width:55.80px;text-align:right;padding-left:2.00px;padding-right:2.90px;font-size:9.29px;color:#111">$35.00</div>
<div class="c" style="left:464.50px;top:361.98px;width:70.80px;text-align:left;padding-left:12.20px;padding-right:2.90px;font-size:9.29px;color:#111">In stock</div>
<div class="dd" style="left:525.40px;top:366.40px"></div>
<div class="c" style="left:535.30px;top:361.98px;width:48.20px;text-align:right;padding-left:2.00px;padding-right:2.90px;font-size:9.29px;color:#111">100</div>
<div class="c" style="left:583.50px;top:361.98px;width:45.00px;text-align:right;padding-left:2.00px;padding-right:2.90px;font-size:9.29px;color:#111">10</div>
<div class="c" style="left:628.50px;top:361.98px;width:97.10px;text-align:left;padding-left:2.00px;padding-right:2.90px;font-size:9.29px;color:#111">ABC Shoes</div>
<div class="c" style="left:725.60px;top:361.98px;width:129.40px;text-align:left;padding-left:2.60px;padding-right:2.90px;font-size:9.29px;color:#111">123-456-7890</div>
<div class="c" style="left:-13.00px;top:376.58px;width:93.30px;text-align:left;padding-left:2.40px;padding-right:2.90px;font-size:9.29px;color:#111">Outdoor Lighting</div>
<div class="c" style="left:80.30px;top:376.58px;width:278.30px;text-align:left;padding-left:2.00px;padding-right:2.90px;font-size:9.29px;color:#111">Solar-powered path lights with a warm white glow</div>
<div class="c" style="left:358.60px;top:376.58px;width:50.10px;text-align:right;padding-left:2.00px;padding-right:2.90px;font-size:9.29px;color:#111">$29.99</div>
<div class="c" style="left:408.70px;top:376.58px;width:55.80px;text-align:right;padding-left:2.00px;padding-right:2.90px;font-size:9.29px;color:#111">$15.00</div>
<div class="c" style="left:464.50px;top:376.58px;width:70.80px;text-align:left;padding-left:12.20px;padding-right:2.90px;font-size:9.29px;color:#111">In stock</div>
<div class="dd" style="left:525.40px;top:381.00px"></div>
<div class="c" style="left:535.30px;top:376.58px;width:48.20px;text-align:right;padding-left:2.00px;padding-right:2.90px;font-size:9.29px;color:#111">50</div>
<div class="c" style="left:583.50px;top:376.58px;width:45.00px;text-align:right;padding-left:2.00px;padding-right:2.90px;font-size:9.29px;color:#111">10</div>
<div class="c" style="left:628.50px;top:376.58px;width:97.10px;text-align:left;padding-left:2.00px;padding-right:2.90px;font-size:9.29px;color:#111">GlowTech</div>
<div class="c" style="left:725.60px;top:376.58px;width:129.40px;text-align:left;padding-left:2.60px;padding-right:2.90px;font-size:9.29px;color:#111">info@glowtech.com</div>
<div class="c" style="left:-13.00px;top:391.18px;width:93.30px;text-align:left;padding-left:2.40px;padding-right:2.90px;font-size:9.29px;color:#111">Bedding</div>
<div class="c" style="left:80.30px;top:391.18px;width:278.30px;text-align:left;padding-left:2.00px;padding-right:2.90px;font-size:9.29px;color:#111">Organic bedding made from high-quality materials</div>
<div class="c" style="left:358.60px;top:391.18px;width:50.10px;text-align:right;padding-left:2.00px;padding-right:2.90px;font-size:9.29px;color:#111">$49.99</div>
<div class="c" style="left:408.70px;top:391.18px;width:55.80px;text-align:right;padding-left:2.00px;padding-right:2.90px;font-size:9.29px;color:#111">$35.00</div>
<div class="c" style="left:464.50px;top:391.18px;width:70.80px;text-align:left;padding-left:12.20px;padding-right:2.90px;font-size:9.29px;color:#111">In stock</div>
<div class="dd" style="left:525.40px;top:395.60px"></div>
<div class="c" style="left:535.30px;top:391.18px;width:48.20px;text-align:right;padding-left:2.00px;padding-right:2.90px;font-size:9.29px;color:#111">100</div>
<div class="c" style="left:583.50px;top:391.18px;width:45.00px;text-align:right;padding-left:2.00px;padding-right:2.90px;font-size:9.29px;color:#111">20</div>
<div class="c" style="left:628.50px;top:391.18px;width:97.10px;text-align:left;padding-left:2.00px;padding-right:2.90px;font-size:9.29px;color:#111">CozyNest Suppliers</div>
<div class="c" style="left:725.60px;top:391.18px;width:129.40px;text-align:left;padding-left:2.60px;padding-right:2.90px;font-size:9.29px;color:#111">supplier@cozynest.com</div>
<div class="c" style="left:-13.00px;top:405.78px;width:93.30px;text-align:left;padding-left:2.40px;padding-right:2.90px;font-size:9.29px;color:#111">Home Improvement</div>
<div class="c" style="left:80.30px;top:405.78px;width:278.30px;text-align:left;padding-left:2.00px;padding-right:2.90px;font-size:9.29px;color:#111">Powerful pressure washer for cleaning various surfaces</div>
<div class="c" style="left:358.60px;top:405.78px;width:50.10px;text-align:right;padding-left:2.00px;padding-right:2.90px;font-size:9.29px;color:#111">$149.99</div>
<div class="c" style="left:408.70px;top:405.78px;width:55.80px;text-align:right;padding-left:2.00px;padding-right:2.90px;font-size:9.29px;color:#111">$100.00</div>
<div class="c" style="left:464.50px;top:405.78px;width:70.80px;text-align:left;padding-left:12.20px;padding-right:2.90px;font-size:9.29px;color:#111">In stock</div>
<div class="dd" style="left:525.40px;top:410.20px"></div>
<div class="c" style="left:535.30px;top:405.78px;width:48.20px;text-align:right;padding-left:2.00px;padding-right:2.90px;font-size:9.29px;color:#111">5</div>
<div class="c" style="left:583.50px;top:405.78px;width:45.00px;text-align:right;padding-left:2.00px;padding-right:2.90px;font-size:9.29px;color:#111">10</div>
<div class="c" style="left:628.50px;top:405.78px;width:97.10px;text-align:left;padding-left:2.00px;padding-right:2.90px;font-size:9.29px;color:#111">ABC Supplier</div>
<div class="c" style="left:725.60px;top:405.78px;width:129.40px;text-align:left;padding-left:2.60px;padding-right:2.90px;font-size:9.29px;color:#111">123-456-7890</div>
<div class="c" style="left:-13.00px;top:420.38px;width:93.30px;text-align:left;padding-left:2.40px;padding-right:2.90px;font-size:9.29px;color:#111">Personal Care</div>
<div class="c" style="left:80.30px;top:420.38px;width:278.30px;text-align:left;padding-left:2.00px;padding-right:2.90px;font-size:9.29px;color:#111">Eco-friendly toothbrush made from bamboo</div>
<div class="c" style="left:358.60px;top:420.38px;width:50.10px;text-align:right;padding-left:2.00px;padding-right:2.90px;font-size:9.29px;color:#111">$4.99</div>
<div class="c" style="left:408.70px;top:420.38px;width:55.80px;text-align:right;padding-left:2.00px;padding-right:2.90px;font-size:9.29px;color:#111">$2.50</div>
<div class="c" style="left:464.50px;top:420.38px;width:70.80px;text-align:left;padding-left:12.20px;padding-right:2.90px;font-size:9.29px;color:#111">In stock</div>
<div class="dd" style="left:525.40px;top:424.80px"></div>
<div class="c" style="left:535.30px;top:420.38px;width:48.20px;text-align:right;padding-left:2.00px;padding-right:2.90px;font-size:9.29px;color:#111">100</div>
<div class="c" style="left:583.50px;top:420.38px;width:45.00px;text-align:right;padding-left:2.00px;padding-right:2.90px;font-size:9.29px;color:#111">20</div>
<div class="c" style="left:628.50px;top:420.38px;width:97.10px;text-align:left;padding-left:2.00px;padding-right:2.90px;font-size:9.29px;color:#111">NatureFresh</div>
<div class="c" style="left:725.60px;top:420.38px;width:129.40px;text-align:left;padding-left:2.60px;padding-right:2.90px;font-size:9.29px;color:#111">info@naturefresh.com</div>
<div class="c" style="left:-13.00px;top:434.98px;width:93.30px;text-align:left;padding-left:2.40px;padding-right:2.90px;font-size:9.29px;color:#111">Plants</div>
<div class="c" style="left:80.30px;top:434.98px;width:278.30px;text-align:left;padding-left:2.00px;padding-right:2.90px;font-size:9.29px;color:#111">Beautiful indoor plant with luna-shaped blooms.</div>
<div class="c" style="left:358.60px;top:434.98px;width:50.10px;text-align:right;padding-left:2.00px;padding-right:2.90px;font-size:9.29px;color:#111">$29.99</div>
<div class="c" style="left:408.70px;top:434.98px;width:55.80px;text-align:right;padding-left:2.00px;padding-right:2.90px;font-size:9.29px;color:#111">$15.00</div>
<div class="c" style="left:464.50px;top:434.98px;width:70.80px;text-align:left;padding-left:12.20px;padding-right:2.90px;font-size:9.29px;color:#111">In stock</div>
<div class="dd" style="left:525.40px;top:439.40px"></div>
<div class="c" style="left:535.30px;top:434.98px;width:48.20px;text-align:right;padding-left:2.00px;padding-right:2.90px;font-size:9.29px;color:#111">50</div>
<div class="c" style="left:583.50px;top:434.98px;width:45.00px;text-align:right;padding-left:2.00px;padding-right:2.90px;font-size:9.29px;color:#111">10</div>
<div class="c" style="left:628.50px;top:434.98px;width:97.10px;text-align:left;padding-left:2.00px;padding-right:2.90px;font-size:9.29px;color:#111">Green Thumb Nursery</div>
<div class="c" style="left:725.60px;top:434.98px;width:129.40px;text-align:left;padding-left:2.60px;padding-right:2.90px;font-size:9.29px;color:#111">John Smith</div>
<div class="c" style="left:-13.00px;top:449.58px;width:93.30px;text-align:left;padding-left:2.40px;padding-right:2.90px;font-size:9.29px;color:#111">Fitness</div>
<div class="c" style="left:80.30px;top:449.58px;width:278.30px;text-align:left;padding-left:2.00px;padding-right:2.90px;font-size:9.29px;color:#111">Resistance bands for strength training</div>
<div class="c" style="left:358.60px;top:449.58px;width:50.10px;text-align:right;padding-left:2.00px;padding-right:2.90px;font-size:9.29px;color:#111">$19.99</div>
<div class="c" style="left:408.70px;top:449.58px;width:55.80px;text-align:right;padding-left:2.00px;padding-right:2.90px;font-size:9.29px;color:#111">$12.50</div>
<div class="c" style="left:464.50px;top:449.58px;width:70.80px;text-align:left;padding-left:12.20px;padding-right:2.90px;font-size:9.29px;color:#111">In stock</div>
<div class="dd" style="left:525.40px;top:454.00px"></div>
<div class="c" style="left:535.30px;top:449.58px;width:48.20px;text-align:right;padding-left:2.00px;padding-right:2.90px;font-size:9.29px;color:#111">50</div>
<div class="c" style="left:583.50px;top:449.58px;width:45.00px;text-align:right;padding-left:2.00px;padding-right:2.90px;font-size:9.29px;color:#111">10</div>
<div class="c" style="left:628.50px;top:449.58px;width:97.10px;text-align:left;padding-left:2.00px;padding-right:2.90px;font-size:9.29px;color:#111">Fitness Equipment Co.</div>
<div class="c" style="left:725.60px;top:449.58px;width:129.40px;text-align:left;padding-left:2.60px;padding-right:2.90px;font-size:9.29px;color:#111">info@fitnessequipment.com</div>
<div class="c" style="left:-13.00px;top:464.18px;width:93.30px;text-align:left;padding-left:2.40px;padding-right:2.90px;font-size:9.29px;color:#111">Electronics</div>
<div class="c" style="left:80.30px;top:464.18px;width:278.30px;text-align:left;padding-left:2.00px;padding-right:2.90px;font-size:9.29px;color:#111">Air purifier with UV-C technology</div>
<div class="c" style="left:358.60px;top:464.18px;width:50.10px;text-align:right;padding-left:2.00px;padding-right:2.90px;font-size:9.29px;color:#111">$199.99</div>
<div class="c" style="left:408.70px;top:464.18px;width:55.80px;text-align:right;padding-left:2.00px;padding-right:2.90px;font-size:9.29px;color:#111">$150.00</div>
<div class="c" style="left:464.50px;top:464.18px;width:70.80px;text-align:left;padding-left:12.20px;padding-right:2.90px;font-size:9.29px;color:#111">In stock</div>
<div class="dd" style="left:525.40px;top:468.60px"></div>
<div class="c" style="left:535.30px;top:464.18px;width:48.20px;text-align:right;padding-left:2.00px;padding-right:2.90px;font-size:9.29px;color:#111">50</div>
<div class="c" style="left:583.50px;top:464.18px;width:45.00px;text-align:right;padding-left:2.00px;padding-right:2.90px;font-size:9.29px;color:#111">10</div>
<div class="c" style="left:628.50px;top:464.18px;width:97.10px;text-align:left;padding-left:2.00px;padding-right:2.90px;font-size:9.29px;color:#111">ABC Electronics</div>
<div class="c" style="left:725.60px;top:464.18px;width:129.40px;text-align:left;padding-left:2.60px;padding-right:2.90px;font-size:9.29px;color:#111">123-456-7890</div>
<div class="c" style="left:-13.00px;top:478.78px;width:93.30px;text-align:left;padding-left:2.40px;padding-right:2.90px;font-size:9.29px;color:#111">Electronics</div>
<div class="c" style="left:80.30px;top:478.78px;width:278.30px;text-align:left;padding-left:2.00px;padding-right:2.90px;font-size:9.29px;color:#111">27-inch gaming monitor with high refresh rate</div>
<div class="c" style="left:358.60px;top:478.78px;width:50.10px;text-align:right;padding-left:2.00px;padding-right:2.90px;font-size:9.29px;color:#111">$299.00</div>
<div class="c" style="left:408.70px;top:478.78px;width:55.80px;text-align:right;padding-left:2.00px;padding-right:2.90px;font-size:9.29px;color:#111">$200.00</div>
<div class="c" style="left:464.50px;top:478.78px;width:70.80px;text-align:left;padding-left:12.20px;padding-right:2.90px;font-size:9.29px;color:#111">In stock</div>
<div class="dd" style="left:525.40px;top:483.20px"></div>
<div class="c" style="left:535.30px;top:478.78px;width:48.20px;text-align:right;padding-left:2.00px;padding-right:2.90px;font-size:9.29px;color:#111">50</div>
<div class="c" style="left:583.50px;top:478.78px;width:45.00px;text-align:right;padding-left:2.00px;padding-right:2.90px;font-size:9.29px;color:#111">10</div>
<div class="c" style="left:628.50px;top:478.78px;width:97.10px;text-align:left;padding-left:2.00px;padding-right:2.90px;font-size:9.29px;color:#111">Tech Supplies</div>
<div class="c" style="left:725.60px;top:478.78px;width:129.40px;text-align:left;padding-left:2.60px;padding-right:2.90px;font-size:9.29px;color:#111">info@techsupplies.com</div>
<div class="c" style="left:-13.00px;top:493.38px;width:93.30px;text-align:left;padding-left:2.40px;padding-right:2.90px;font-size:9.29px;color:#111">Electronics</div>
<div class="c" style="left:80.30px;top:493.38px;width:278.30px;text-align:left;padding-left:2.00px;padding-right:2.90px;font-size:9.29px;color:#111">Wireless earbuds with high-quality sound</div>
<div class="c" style="left:358.60px;top:493.38px;width:50.10px;text-align:right;padding-left:2.00px;padding-right:2.90px;font-size:9.29px;color:#111">$49.99</div>
<div class="c" style="left:408.70px;top:493.38px;width:55.80px;text-align:right;padding-left:2.00px;padding-right:2.90px;font-size:9.29px;color:#111">$30.00</div>
<div class="c" style="left:464.50px;top:493.38px;width:70.80px;text-align:left;padding-left:12.20px;padding-right:2.90px;font-size:9.29px;color:#111">In stock</div>
<div class="dd" style="left:525.40px;top:497.80px"></div>
<div class="c" style="left:535.30px;top:493.38px;width:48.20px;text-align:right;padding-left:2.00px;padding-right:2.90px;font-size:9.29px;color:#111">100</div>
<div class="c" style="left:583.50px;top:493.38px;width:45.00px;text-align:right;padding-left:2.00px;padding-right:2.90px;font-size:9.29px;color:#111">20</div>
<div class="c" style="left:628.50px;top:493.38px;width:97.10px;text-align:left;padding-left:2.00px;padding-right:2.90px;font-size:9.29px;color:#111">HarmonySounds</div>
<div class="c" style="left:725.60px;top:493.38px;width:129.40px;text-align:left;padding-left:2.60px;padding-right:2.90px;font-size:9.29px;color:#111">info@harmonysounds.com</div>
<div class="dd" style="left:525.40px;top:512.40px"></div>
<div class="dd" style="left:525.40px;top:527.00px"></div>
<div class="dd" style="left:525.40px;top:541.60px"></div>
<div class="dd" style="left:525.40px;top:556.20px"></div>
<div class="dd" style="left:525.40px;top:570.80px"></div>
<div style="position:absolute;left:79.80px;top:111.80px;width:279.30px;height:15.40px;border:1.5px solid #1a73e8;box-sizing:border-box"></div>
<div style="position:absolute;left:356.50px;top:124.10px;width:5.4px;height:5.4px;border-radius:50%;background:#1a73e8"></div>
</div>
<div style="position:absolute;left:804.6px;top:75.3px;width:8.6px;height:543px;background:#fbfbfb;border-left:1px solid #ececec;box-sizing:border-box"></div>
<div style="position:absolute;left:805.6px;top:75.3px;width:7.6px;height:42.7px;background:#f6f6f6"></div>
<div style="position:absolute;left:805.6px;top:118px;width:7.6px;height:3px;background:#dfe5ee"></div>
<div style="position:absolute;left:806px;top:121.3px;width:6px;height:87.5px;background:#dadce0;border-radius:3px"></div>
<div style="position:absolute;left:813.5px;top:52px;width:208.5px;height:566px;background:#fff"></div>
<div style="position:absolute;left:1022px;top:52px;width:2px;height:566px;background:#f5f6f8"></div>
<div style="position:absolute;left:813px;top:52px;width:1px;height:566px;background:#dcdcdc"></div>
<div style="position:absolute;left:917.8px;top:52.5px;width:104.2px;height:29.5px;background:#f2f2f4;border-bottom-left-radius:6px;box-shadow:inset 1px -1px 1px rgba(0,0,0,0.03)"></div>
<svg style="position:absolute;left:836px;top:61px" width="16" height="14" viewBox="0 0 16 14">
<rect x="3.9" y="0.4" width="11.1" height="7.5" rx="0.9" fill="#7eacf4"/>
<path d="M12.6 7.8 L14.6 7.8 L14.2 9.6 Z" fill="#7eacf4"/>
<rect x="0.2" y="3.2" width="10.9" height="7.7" rx="0.8" fill="#2f6ee0"/>
<path d="M0.8 10.8 L3.2 10.8 L1.0 12.9 Z" fill="#2f6ee0"/>
<text x="2.9" y="9.2" font-family="Liberation Sans" font-weight="bold" font-size="5.6" fill="#fff" letter-spacing="-0.2">AI</text>
</svg>
<div class="t" style="left:854.20px;top:61.87px;font-size:10.20px;line-height:14px;color:#444;font-weight:normal;letter-spacing:-0.05px">ChatGPT</div>
<svg style="position:absolute;left:944.7px;top:61.4px" width="13.2" height="13.3" viewBox="0 0 13.2 13.3">
<rect x="0" y="0" width="13.2" height="13.3" rx="1.3" fill="#16924f"/>
<path d="M4.2 3.2 L9.8 6.65 L4.2 10.1 Z" fill="#fff"/>
</svg>
<div class="t" style="left:962.30px;top:61.83px;font-size:10.30px;line-height:14px;color:#444;font-weight:normal;letter-spacing:-0.05px">Actions</div>
<div style="position:absolute;left:814px;top:82px;width:205px;height:45px;background:#fff"></div>
<div class="t" style="left:823.00px;top:88.50px;font-size:12.40px;line-height:14px;color:#222;font-weight:normal;letter-spacing:0.00px">Custom Chat</div>
<div style="position:absolute;left:903.5px;top:93.6px;width:8px;height:4.8px;background:#2a2a2a;clip-path:polygon(0 0,100% 0,50% 100%)"></div>
<svg style="position:absolute;left:1000px;top:87px" width="20" height="19" viewBox="0 0 20 19">
<circle cx="9.2" cy="9.4" r="7.6" fill="none" stroke="#3a3a3a" stroke-width="1.3"/>
<circle cx="4.9" cy="9.6" r="1.25" fill="#222"/><circle cx="9.1" cy="9.6" r="1.25" fill="#222"/><circle cx="13.2" cy="9.6" r="1.25" fill="#222"/>
<circle cx="14.6" cy="3.9" r="2.9" fill="#f20d0d"/>
</svg>
<div class="t" style="left:822.30px;top:106.86px;font-size:10.50px;line-height:14px;color:#444;font-weight:normal;letter-spacing:0.30px">What is the cheapest product?</div>
<div style="position:absolute;left:814px;top:126.70px;width:205px;height:141.70px;background:#f3f3f3"></div>
<div class="t" style="left:822.3px;top:136.73px;font-size:10px;line-height:14px;color:#3a3a3a;letter-spacing:0.08px;white-space:pre"><span style="-webkit-text-stroke:0.35px #3a3a3a;letter-spacing:0.55px">AI Assistant</span> <span style="color:#a6a6a6;font-size:10.2px;letter-spacing:0.22px">$0.0258, 17s, 1.1s, 9.9s,</span></div>
<div class="t" style="left:822.30px;top:148.57px;font-size:10.20px;line-height:14px;color:#a6a6a6;font-weight:normal;letter-spacing:0.22px">SQL(15s)</div>
<div class="t" style="left:822.30px;top:160.56px;font-size:10.50px;line-height:14px;color:#3a3a3a;font-weight:normal;letter-spacing:0.30px">The cheapest product is the</div>
<div class="t" style="left:822.30px;top:172.26px;font-size:10.50px;line-height:14px;color:#3a3a3a;font-weight:normal;letter-spacing:0.30px">"NatureFresh Bamboo Toothbrush"</div>
<div class="t" style="left:822.30px;top:183.96px;font-size:10.50px;line-height:14px;color:#3a3a3a;font-weight:normal;letter-spacing:0.30px">with a price of $4.99.</div>
<div style="position:absolute;left:822.1px;top:202.50px;width:63.6px;height:16.3px;border:1px solid #e2e2e2;border-radius:2.5px;box-sizing:border-box;background:#f5f5f5"></div>
<svg style="position:absolute;left:826.8px;top:206.90px" width="8.2" height="6.9" viewBox="0 0 8.2 6.9">
<rect x="0" y="0" width="8.2" height="6.9" rx="0.8" fill="#3a9a5c"/>
<rect x="1.1" y="1.3" width="2.6" height="1.6" rx="0.5" fill="#f1f6f2"/><rect x="4.5" y="1.3" width="2.6" height="1.6" rx="0.5" fill="#f1f6f2"/>
<rect x="1.1" y="4.0" width="2.6" height="1.6" rx="0.5" fill="#f1f6f2"/><rect x="4.5" y="4.0" width="2.6" height="1.6" rx="0.5" fill="#f1f6f2"/>
</svg>
<div class="t" style="left:842.00px;top:203.52px;font-size:8.60px;line-height:14px;color:#4a7fe0;font-weight:normal;letter-spacing:0.72px;-webkit-text-stroke:0.2px #4a7fe0">Products</div>
<div style="position:absolute;left:819.2px;top:224.30px;width:200px;height:1px;background:#e4e4e4"></div>
<div style="position:absolute;left:822.4px;top:230.60px;width:69px;height:28.6px;border:1px solid #e6e6e6;border-radius:2.5px;box-sizing:border-box;background:#fff"></div>
<svg style="position:absolute;left:829.6px;top:237.80px" width="13.6" height="12.8" viewBox="0 0 13.6 12.8">
<rect x="0.8" y="0.8" width="12" height="11.2" rx="1.8" fill="none" stroke="#ef9a4f" stroke-width="1.5"/>
<line x1="0.8" y1="4.2" x2="12.8" y2="4.2" stroke="#ef9a4f" stroke-width="1.4"/>
<line x1="4.9" y1="4.2" x2="4.9" y2="12" stroke="#ef9a4f" stroke-width="1.3"/>
<line x1="8.7" y1="4.2" x2="8.7" y2="12" stroke="#ef9a4f" stroke-width="1.3"/>
</svg>
<div class="t" style="left:849.30px;top:237.92px;font-size:8.60px;line-height:14px;color:#ef9a4f;font-weight:normal;letter-spacing:0.62px;-webkit-text-stroke:0.3px #ef9a4f">Result 2</div>
<div style="position:absolute;left:896.1px;top:230.60px;width:39.9px;height:28.6px;border:1.2px solid #5b93f0;border-radius:3px;box-sizing:border-box;background:#fff"></div>
<div class="t" style="left:902.60px;top:237.92px;font-size:8.60px;line-height:14px;color:#3f7be6;font-weight:normal;letter-spacing:0.50px;-webkit-text-stroke:0.3px #3f7be6">debug</div>
<div style="position:absolute;left:814px;top:268.40px;width:205px;height:42.50px;background:#fff"></div>
<div class="t" style="left:822.30px;top:276.97px;font-size:10.20px;line-height:14px;color:#333;font-weight:normal;letter-spacing:0.25px;-webkit-text-stroke:0.35px #333">You</div>
<div class="t" style="left:822.30px;top:289.76px;font-size:10.50px;line-height:14px;color:#444;font-weight:normal;letter-spacing:0.30px">What is most expensive?</div>
<div style="position:absolute;left:814px;top:310.90px;width:205px;height:141.60px;background:#f3f3f3"></div>
<div class="t" style="left:822.3px;top:320.94px;font-size:10px;line-height:14px;color:#3a3a3a;letter-spacing:0.08px;white-space:pre"><span style="-webkit-text-stroke:0.35px #3a3a3a;letter-spacing:0.55px">AI Assistant</span> <span style="color:#a6a6a6;font-size:10.2px;letter-spacing:0.22px">$0.0266, 17s, 1.1s, 9.5s,</span></div>
<div class="t" style="left:822.30px;top:332.77px;font-size:10.20px;line-height:14px;color:#a6a6a6;font-weight:normal;letter-spacing:0.22px">SQL(15s)</div>
<div class="t" style="left:822.30px;top:344.76px;font-size:10.50px;line-height:14px;color:#3a3a3a;font-weight:normal;letter-spacing:0.30px">The most expensive product is the</div>
<div class="t" style="left:822.30px;top:356.46px;font-size:10.50px;line-height:14px;color:#3a3a3a;font-weight:normal;letter-spacing:0.30px">"NovaGlo Gaming Monitor" with a</div>
<div class="t" style="left:822.30px;top:368.16px;font-size:10.50px;line-height:14px;color:#3a3a3a;font-weight:normal;letter-spacing:0.30px">price of $299.</div>
<div style="position:absolute;left:822.1px;top:386.70px;width:63.6px;height:16.3px;border:1px solid #e2e2e2;border-radius:2.5px;box-sizing:border-box;background:#f5f5f5"></div>
<svg style="position:absolute;left:826.8px;top:391.10px" width="8.2" height="6.9" viewBox="0 0 8.2 6.9">
<rect x="0" y="0" width="8.2" height="6.9" rx="0.8" fill="#3a9a5c"/>
<rect x="1.1" y="1.3" width="2.6" height="1.6" rx="0.5" fill="#f1f6f2"/><rect x="4.5" y="1.3" width="2.6" height="1.6" rx="0.5" fill="#f1f6f2"/>
<rect x="1.1" y="4.0" width="2.6" height="1.6" rx="0.5" fill="#f1f6f2"/><rect x="4.5" y="4.0" width="2.6" height="1.6" rx="0.5" fill="#f1f6f2"/>
</svg>
<div class="t" style="left:842.00px;top:387.72px;font-size:8.60px;line-height:14px;color:#4a7fe0;font-weight:normal;letter-spacing:0.72px;-webkit-text-stroke:0.2px #4a7fe0">Products</div>
<div style="position:absolute;left:819.2px;top:408.50px;width:200px;height:1px;background:#e4e4e4"></div>
<div style="position:absolute;left:822.4px;top:414.80px;width:69px;height:28.6px;border:1px solid #e6e6e6;border-radius:2.5px;box-sizing:border-box;background:#fff"></div>
<svg style="position:absolute;left:829.6px;top:422.00px" width="13.6" height="12.8" viewBox="0 0 13.6 12.8">
<rect x="0.8" y="0.8" width="12" height="11.2" rx="1.8" fill="none" stroke="#ef9a4f" stroke-width="1.5"/>
<line x1="0.8" y1="4.2" x2="12.8" y2="4.2" stroke="#ef9a4f" stroke-width="1.4"/>
<line x1="4.9" y1="4.2" x2="4.9" y2="12" stroke="#ef9a4f" stroke-width="1.3"/>
<line x1="8.7" y1="4.2" x2="8.7" y2="12" stroke="#ef9a4f" stroke-width="1.3"/>
</svg>
<div class="t" style="left:849.30px;top:422.12px;font-size:8.60px;line-height:14px;color:#ef9a4f;font-weight:normal;letter-spacing:0.62px;-webkit-text-stroke:0.3px #ef9a4f">Result 2</div>
<div style="position:absolute;left:896.1px;top:414.80px;width:39.9px;height:28.6px;border:1.2px solid #5b93f0;border-radius:3px;box-sizing:border-box;background:#fff"></div>
<div class="t" style="left:902.60px;top:422.12px;font-size:8.60px;line-height:14px;color:#3f7be6;font-weight:normal;letter-spacing:0.50px;-webkit-text-stroke:0.3px #3f7be6">debug</div>
<div style="position:absolute;left:814px;top:452.50px;width:205px;height:41.50px;background:#fff"></div>
<div class="t" style="left:822.30px;top:461.07px;font-size:10.20px;line-height:14px;color:#333;font-weight:normal;letter-spacing:0.25px;-webkit-text-stroke:0.35px #333">You</div>
<div class="t" style="left:822.30px;top:473.86px;font-size:10.50px;line-height:14px;color:#444;font-weight:normal;letter-spacing:0.30px">What is most profitable?</div>
<div style="position:absolute;left:814px;top:494.00px;width:205px;height:124.00px;background:#f3f3f3"></div>
<div class="t" style="left:822.3px;top:504.04px;font-size:10px;line-height:14px;color:#3a3a3a;letter-spacing:0.08px;white-space:pre"><span style="-webkit-text-stroke:0.35px #3a3a3a;letter-spacing:0.55px">AI Assistant</span> <span style="color:#a6a6a6;font-size:10.2px;letter-spacing:0.22px">$0.0272, 24s, 1.3s, 13s,</span></div>
<div class="t" style="left:822.30px;top:515.87px;font-size:10.20px;line-height:14px;color:#a6a6a6;font-weight:normal;letter-spacing:0.22px">SQL(21s), AN-(24s)</div>
<div class="t" style="left:822.30px;top:527.86px;font-size:10.50px;line-height:14px;color:#3a3a3a;font-weight:normal;letter-spacing:0.30px">The most profitable product is the</div>
<div class="t" style="left:822.30px;top:539.56px;font-size:10.50px;line-height:14px;color:#3a3a3a;font-weight:normal;letter-spacing:0.30px">"NovaGlo Gaming Monitor" with a</div>
<div class="t" style="left:822.30px;top:551.26px;font-size:10.50px;line-height:14px;color:#3a3a3a;font-weight:normal;letter-spacing:0.30px">price of $299 and a profit margin</div>
<div style="position:absolute;left:1019px;top:109.7px;width:3px;height:443.4px;background:#efefef"></div>
<div style="position:absolute;left:1019px;top:307.8px;width:3px;height:117.4px;background:#979797"></div>
<div style="position:absolute;left:813.5px;top:553.1px;width:208.5px;height:27.7px;background:#e8fbf0"></div>
<div style="position:absolute;left:813.5px;top:580.8px;width:208.5px;height:1.2px;background:#d2d2d2"></div>
<div style="position:absolute;left:813.5px;top:582px;width:208.5px;height:37px;background:#fff"></div>
<div style="position:absolute;left:821.2px;top:560.3px;width:12.7px;height:12.7px;border:2px solid #151515;border-radius:2.4px;box-sizing:border-box"></div>
<div class="t" style="left:838.90px;top:560.11px;font-size:9.50px;line-height:14px;color:#333;font-weight:normal;letter-spacing:0.26px">Asking about selected range</div>
<svg style="position:absolute;left:997.8px;top:559px" width="15" height="15" viewBox="0 0 15 15">
<circle cx="7.5" cy="7.5" r="6.4" fill="none" stroke="#444" stroke-width="1.35"/>
<circle cx="7.5" cy="4.7" r="0.85" fill="#444"/>
<rect x="6.85" y="6.6" width="1.3" height="4.3" rx="0.5" fill="#444"/>
</svg>
<div class="t" style="left:816.60px;top:583.21px;font-size:9.20px;line-height:14px;color:#b0b0b0;font-weight:normal;letter-spacing:0.00px">Write a message</div>
</div>
</body></html>
